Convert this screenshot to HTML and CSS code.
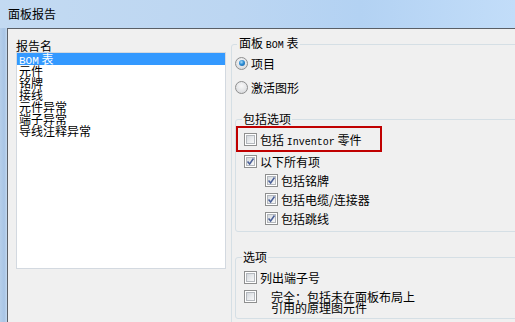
FILE: index.html
```
<!DOCTYPE html>
<html lang="zh-CN">
<head>
    <meta charset="UTF-8">
    <title>面板报告</title>
    <link rel="stylesheet" href="styles.css">
</head>
<body>
    <div class="window">
        <div class="titlebar">面板报告</div>
        <div class="frame">
            <div class="frame-edge"></div>
            <div class="content">
                <div class="report-col">
                    <div class="report-label">报告名</div>
                    <ul class="report-list">
                        <li class="selected"><span class="mono list-mono">BOM</span> 表</li>
                        <li>元件</li>
                        <li>铭牌</li>
                        <li>接线</li>
                        <li>元件异常</li>
                        <li>端子异常</li>
                        <li>导线注释异常</li>
                    </ul>
                </div>
                <div class="options-col">
                    <fieldset class="group outer">
                        <legend>面板 <span class="mono">BOM</span> 表</legend>
                        <div class="radio-row first">
                            <span class="radio checked"></span>
                            <span>项目</span>
                        </div>
                        <div class="radio-row">
                            <span class="radio"></span>
                            <span>激活图形</span>
                        </div>

                        <fieldset class="group inner include">
                            <legend>包括选项</legend>
                            <div class="highlight-box">
                                <span class="check"></span>
                                <span>包括 <span class="mono">Inventor</span> 零件</span>
                            </div>
                            <div class="check-row">
                                <span class="check checked"><svg viewBox="0 0 13 13"><path d="M3 6.5 L5.5 9.5 L10 3"/></svg></span>
                                <span>以下所有项</span>
                            </div>
                            <div class="check-row sub">
                                <span class="check checked"><svg viewBox="0 0 13 13"><path d="M3 6.5 L5.5 9.5 L10 3"/></svg></span>
                                <span>包括铭牌</span>
                            </div>
                            <div class="check-row sub">
                                <span class="check checked"><svg viewBox="0 0 13 13"><path d="M3 6.5 L5.5 9.5 L10 3"/></svg></span>
                                <span>包括电缆/连接器</span>
                            </div>
                            <div class="check-row sub">
                                <span class="check checked"><svg viewBox="0 0 13 13"><path d="M3 6.5 L5.5 9.5 L10 3"/></svg></span>
                                <span>包括跳线</span>
                            </div>
                        </fieldset>

                        <fieldset class="group inner extra">
                            <legend>选项</legend>
                            <div class="check-row first">
                                <span class="check"></span>
                                <span>列出端子号</span>
                            </div>
                            <div class="check-row multi">
                                <span class="check"></span>
                                <span class="multi-text">完全：包括未在面板布局上<br>引用的原理图元件</span>
                            </div>
                        </fieldset>
                    </fieldset>
                </div>
            </div>
        </div>
    </div>
</body>
</html>
```

FILE: styles.css
```
html, body {
    margin: 0;
    padding: 0;
    width: 515px;
    height: 322px;
    overflow: hidden;
}
body {
    background-color: #f0f0f0;
    font-family: "Noto Sans CJK SC", "Liberation Sans", sans-serif;
    font-size: 12px;
    color: #000;
}
.window {
    display: flex;
    flex-direction: column;
    height: 322px;
}
/* 标题栏 */
.titlebar {
    height: 28px;
    line-height: 28px;
    padding-left: 8px;
    background: linear-gradient(to right, #c3daf2 0%, #bcd6f2 45%, #b3d2f3 70%, #c2ddf9 100%);
    color: #000;
}
.frame {
    flex: 1;
    display: flex;
    min-width: 0;
}
.frame-edge {
    width: 7px;
    flex-shrink: 0;
    background: linear-gradient(to right, #b6cfea, #a9c5e5 60%, #c2d8ef);
}
.content {
    flex: 1;
    min-width: 0;
    display: flex;
    gap: 5px;
    padding: 10px 0 0 8px;
    border-top: 1px solid #5a5f66;
    border-left: 1px solid #5a5f66;
    background-color: #f0f0f0;
}
.mono {
    font-family: "Liberation Mono", monospace;
    font-size: 10px;
}
.list-mono {
    font-size: 11px;
}
/* 报告名列表 */
.report-col {
    width: 210px;
    flex-shrink: 0;
}
.report-label {
    height: 13px;
    line-height: 13px;
}
.report-list {
    list-style: none;
    margin: 0;
    padding: 0;
    height: 217px;
    box-sizing: border-box;
    border: 1px solid #d3d9e0;
    background-color: #fff;
}
.report-list li {
    height: 12px;
    line-height: 12px;
    padding-left: 2px;
    white-space: nowrap;
}
.report-list li.selected {
    background-color: #3399ff;
    color: #fff;
}
/* 右侧选项 */
.options-col {
    width: 330px;
    flex-shrink: 0;
}
.group {
    margin: 0;
    border: 1px solid #d5dfe5;
    border-radius: 3px;
    min-width: 0;
}
.group legend {
    line-height: 14px;
    padding: 0 2px;
}
.outer {
    margin-top: -3px;
    padding: 0 0 0 3px;
    height: 300px;
    box-sizing: border-box;
}
.outer > legend {
    margin-left: 2px;
}
.radio-row {
    display: flex;
    align-items: center;
    gap: 3px;
    height: 24px;
}
.radio-row.first {
    margin-top: -2px;
}
.radio {
    width: 13px;
    height: 13px;
    box-sizing: border-box;
    border-radius: 50%;
    border: 1px solid #8e8f8f;
    background: radial-gradient(circle at 50% 35%, #f8f8f8 0%, #e2e3e5 60%, #cfd1d4 100%);
    display: flex;
    align-items: center;
    justify-content: center;
}
.radio.checked::after {
    content: "";
    width: 6px;
    height: 6px;
    border-radius: 50%;
    background: radial-gradient(circle at 40% 35%, #a9dcfa 0%, #2b8cd4 45%, #1a5a98 100%);
}
.inner {
    padding: 0;
    width: 320px;
    box-sizing: border-box;
}
.inner legend {
    margin-left: 6px;
    padding: 0 1px;
}
.include {
    margin-top: 13px;
    padding-bottom: 3px;
}
.extra {
    margin-top: 18px;
    padding-bottom: 6px;
}
.highlight-box {
    width: 146px;
    height: 26px;
    box-sizing: border-box;
    border: 2px solid #c00000;
    padding-left: 6px;
    display: flex;
    align-items: center;
    gap: 3px;
}
.check-row {
    display: flex;
    align-items: center;
    gap: 3px;
    height: 19px;
    padding-left: 8px;
}
.check-row.sub {
    padding-left: 29px;
}
.extra .check-row.first {
    margin-top: 4px;
}
.check-row.multi {
    align-items: flex-start;
    height: 22px;
    margin-top: 3px;
    gap: 14px;
}
.multi-text {
    line-height: 11px;
    padding-top: 1px;
}
.check {
    width: 13px;
    height: 13px;
    box-sizing: border-box;
    border: 1px solid #8e8f8f;
    background-color: #fff;
    padding: 1px;
    flex-shrink: 0;
    position: relative;
}
.check::before {
    content: "";
    display: block;
    width: 100%;
    height: 100%;
    box-sizing: border-box;
    border: 1px solid #b4b8bd;
    background: linear-gradient(135deg, #d4d8dd 0%, #e9ebed 55%, #f8f8f8 100%);
}
.check svg {
    position: absolute;
    left: 0;
    top: 0;
    width: 11px;
    height: 11px;
}
.check svg path {
    fill: none;
    stroke: #4a5f97;
    stroke-width: 1.8;
}
```
